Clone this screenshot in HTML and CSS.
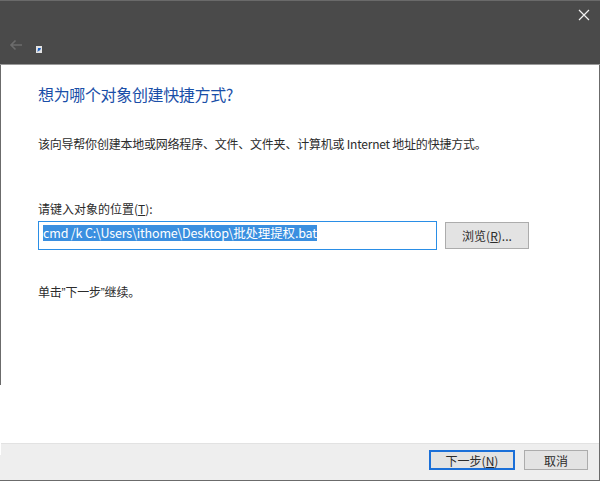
FILE: index.html
```html
<!DOCTYPE html>
<html lang="zh-CN">
<head>
<meta charset="utf-8">
<title>创建快捷方式</title>
<link rel="stylesheet" href="styles.css">
</head>
<body>
<div class="window">
  <header class="titlebar">
    <div class="close-row">
      <svg class="close" width="12" height="12" viewBox="0 0 12 12"><path d="M1 1 11 11M11 1 1 11" stroke="#f2f2f2" stroke-width="1.2" fill="none"/></svg>
    </div>
    <div class="nav-row">
      <svg class="back" width="13" height="12" viewBox="0 0 13 12"><path d="M13 6H2M6.500 1.500 2 6l4.500 4.500" stroke="#6c6c6c" stroke-width="1.600" fill="none"/></svg>
      <svg class="app-icon" width="6" height="7" viewBox="0 0 6 7"><rect width="6" height="7" fill="#e4e4e4"/><path d="M1.500 6 2 2h3L4 4.500H3z" fill="#1d5fc0"/></svg>
    </div>
  </header>
  <main class="content">
    <h1 class="heading">想为哪个对象创建快捷方式?</h1>
    <p class="intro">该向导帮你创建本地或网络程序、文件、文件夹、计算机或 Internet 地址的快捷方式。</p>
    <label class="field-label">请键入对象的位置(<u>T</u>):</label>
    <div class="field-row">
      <div class="field"><span class="selected">cmd /k C:\Users\ithome\Desktop\批处理提权.bat</span></div>
      <div class="button browse">浏览(<u>R</u>)...</div>
    </div>
    <p class="hint">单击<span class="quote">”</span>下一步<span class="quote">”</span>继续。</p>
  </main>
  <footer class="footer">
    <div class="button next">下一步(<u>N</u>)</div>
    <div class="button cancel">取消</div>
  </footer>
  <div class="edge-gap"></div>
</div>
</body>
</html>
```
FILE: styles.css
```css
* { box-sizing: border-box; }
html, body { margin: 0; padding: 0; background: #fff; }
body { font-family: "Noto Sans CJK SC", "Liberation Sans", sans-serif; }
.window {
  position: relative;
  width: 600px;
  height: 481px;
  display: flex;
  flex-direction: column;
  border-left: 1px solid #6b6b6b;
  border-right: 1px solid #6b6b6b;
  border-bottom: 1px solid #6b6b6b;
}
.titlebar {
  height: 65px;
  margin: 0 -1px;
  background: #4a4a4a;
  border-top: 1px solid #6a6a6a;
  border-bottom: 1px solid #9a9a9a;
  display: flex;
  flex-direction: column;
  flex: none;
}
.close-row { height: 37px; display: flex; justify-content: flex-end; padding: 8px 10px 0 0; }
.nav-row { display: flex; align-items: flex-start; padding-left: 9px; }
.back { margin-top: 1px; }
.app-icon { margin-left: 14px; margin-top: 8px; }
.content { flex: 1; background: #fff; padding: 17px 0 0 37px; color: #2b2b2b; }
.heading { margin: 0; font-size: 16px; line-height: 24px; font-weight: 400; color: #1a4fa8; letter-spacing: -0.35px; }
.intro { margin: 29px 0 0; font-size: 12px; line-height: 18px; letter-spacing: -0.22px; }
.field-label { display: block; margin-top: 47px; font-size: 12px; line-height: 18px; }
.field-row { display: flex; align-items: center; margin-top: 3px; gap: 8px; }
.field {
  width: 399px;
  height: 29px;
  padding: 3px 0 0 4px;
  border: 1px solid #2a8ee6;
  font-size: 12.5px;
  line-height: 16px;
  letter-spacing: -0.16px;
}
.selected { display: inline-block; background: #3a8fe0; color: #fff; height: 16px; }
.button {
  display: flex;
  align-items: center;
  justify-content: center;
  background: #e3e3e3;
  border: 1px solid #acacac;
  color: #2b2b2b;
  font-size: 12px;
}
.browse { width: 84px; height: 27px; }
.hint { margin: 33px 0 0; font-size: 12px; line-height: 18px; letter-spacing: -0.2px; }
.quote { font-family: "Liberation Sans", sans-serif; }
.footer {
  height: 37px;
  flex: none;
  margin-left: -1px;
  background: #eee;
  border-top: 1px solid #e2e2e2;
  display: flex;
  justify-content: flex-end;
  gap: 9px;
  padding: 6px 11px 0 0;
}
.next { width: 86px; height: 20px; border: 2px solid #1a6fd8; }
.cancel { width: 64px; height: 20px; }
.edge-gap { position: absolute; left: -1px; top: 385px; width: 1px; height: 70px; background: #fff; }
```
